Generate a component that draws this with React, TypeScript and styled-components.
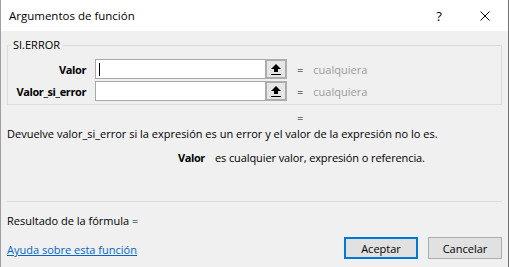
import React from "react";
import styled, { createGlobalStyle, css } from "styled-components";

const GlobalStyle = createGlobalStyle`
  html, body { margin: 0; padding: 0; background: #ffffff; }
  body { font-family: "Open Sans", "Liberation Sans", Arial, sans-serif; color: #000; }
  * { box-sizing: border-box; }
`;

const Window = styled.div`
  width: 509px;
  height: 267px;
  display: flex;
  flex-direction: column;
  border-left: 1px solid #a0a0a0;
  border-right: 1px solid #707070;
  overflow: hidden;
`;

const TitleBar = styled.div`
  height: 31px;
  flex: none;
  display: flex;
  align-items: center;
  background: #ffffff;
  padding-left: 8px;
  font-size: 11.5px;
`;

const TitleText = styled.div`
  flex: 1;
`;

const TitleButton = styled.div`
  width: 46px;
  height: 31px;
  display: flex;
  align-items: center;
  justify-content: center;
  font-size: 13px;
`;

const Body = styled.div`
  flex: 1;
  background: #f0f0f0;
  padding: 0 6px;
  display: flex;
  flex-direction: column;
  font-size: 11px;
`;

const Group = styled.fieldset`
  margin: 7px 0 0 0;
  padding: 0 0 3px 3px;
  border: 1px solid #dcdcdc;
  min-width: 0;
`;

const Legend = styled.legend`
  padding: 0 2px;
  font-size: 11px;
  line-height: 14px;
`;

const Rows = styled.div`
  margin-top: 7px;
  display: flex;
  flex-direction: column;
  gap: 2px;
`;

const Row = styled.div`
  display: flex;
  align-items: center;
  height: 20px;
`;

const Label = styled.div`
  width: 75px;
  text-align: right;
  font-weight: bold;
  letter-spacing: -0.4px;
  margin-right: 9px;
`;

const InputWrap = styled.div`
  width: 192px;
  height: 20px;
  display: flex;
`;

const Field = styled.div`
  flex: 1;
  background: #ffffff;
  border: 1px solid #a8a8a8;
  border-right: none;
  display: flex;
  align-items: center;
`;

const Caret = styled.span`
  width: 1px;
  height: 13px;
  background: #000;
  margin-left: 3px;
`;

const RefButton = styled.div`
  width: 22px;
  height: 20px;
  border: 2px solid #adadad;
  background: #e6e6e6;
  display: flex;
  align-items: center;
  justify-content: center;
`;

const Eq = styled.span`
  margin-left: 10px;
`;

const Value = styled.span`
  margin-left: 10px;
  color: #9b9b9b;
`;

const EqLine = styled.div`
  margin-top: 6px;
  padding-left: 290px;
  line-height: 14px;
`;

const Desc = styled.div`
  margin-top: 2px;
  line-height: 14px;
`;

const ArgLine = styled.div`
  margin-top: 10px;
  padding-left: 171px;
  line-height: 14px;
  letter-spacing: -0.1px;
`;

const ArgName = styled.b`
  letter-spacing: -0.4px;
  margin-right: 10px;
`;

const Separator = styled.div`
  margin-top: 36px;
  height: 1px;
  background: #dcdcdc;
`;

const Result = styled.div`
  margin-top: 12px;
  line-height: 14px;
`;

const Footer = styled.div`
  margin-top: 9px;
  height: 22px;
  display: flex;
  align-items: center;
  justify-content: space-between;
`;

const HelpLink = styled.a`
  color: #0066cc;
  text-decoration: underline;
  line-height: 14px;
  align-self: flex-end;
  margin-bottom: 2px;
  cursor: pointer;
`;

const Buttons = styled.div`
  display: flex;
  gap: 10px;
`;

const Button = styled.button<{ $primary?: boolean }>`
  width: 74px;
  height: 22px;
  padding: 0;
  background: #e1e1e1;
  border: 1px solid #adadad;
  font-family: inherit;
  font-size: 11px;
  color: #000;
  ${(p) =>
    p.$primary &&
    css`
      border: 2px solid #0078d7;
    `}
`;

const RefIcon = () => (
  <svg width="10" height="11" viewBox="0 0 10 11">
    <polygon points="5,0 10,5 7,5 7,8 3,8 3,5 0,5" fill="#000" />
    <rect x="0" y="10" width="10" height="1" fill="#000" />
  </svg>
);

const CloseIcon = () => (
  <svg width="10" height="10" viewBox="0 0 10 10">
    <path d="M0.5 0.5 L9.5 9.5 M9.5 0.5 L0.5 9.5" stroke="#000" strokeWidth="1" />
  </svg>
);

const args = [
  { name: "Valor", caret: true },
  { name: "Valor_si_error", caret: false },
];

export default function App() {
  return (
    <>
      <GlobalStyle />
      <Window>
        <TitleBar>
          <TitleText>Argumentos de función</TitleText>
          <TitleButton>?</TitleButton>
          <TitleButton>
            <CloseIcon />
          </TitleButton>
        </TitleBar>
        <Body>
          <Group>
            <Legend>SI.ERROR</Legend>
            <Rows>
              {args.map((a) => (
                <Row key={a.name}>
                  <Label>{a.name}</Label>
                  <InputWrap>
                    <Field>{a.caret && <Caret />}</Field>
                    <RefButton>
                      <RefIcon />
                    </RefButton>
                  </InputWrap>
                  <Eq>=</Eq>
                  <Value>cualquiera</Value>
                </Row>
              ))}
            </Rows>
          </Group>
          <EqLine>=</EqLine>
          <Desc>
            Devuelve valor_si_error si la expresión es un error y el valor de la expresión no lo es.
          </Desc>
          <ArgLine>
            <ArgName>Valor</ArgName>es cualquier valor, expresión o referencia.
          </ArgLine>
          <Separator />
          <Result>Resultado de la fórmula =</Result>
          <Footer>
            <HelpLink>Ayuda sobre esta función</HelpLink>
            <Buttons>
              <Button $primary>Aceptar</Button>
              <Button>Cancelar</Button>
            </Buttons>
          </Footer>
        </Body>
      </Window>
    </>
  );
}
